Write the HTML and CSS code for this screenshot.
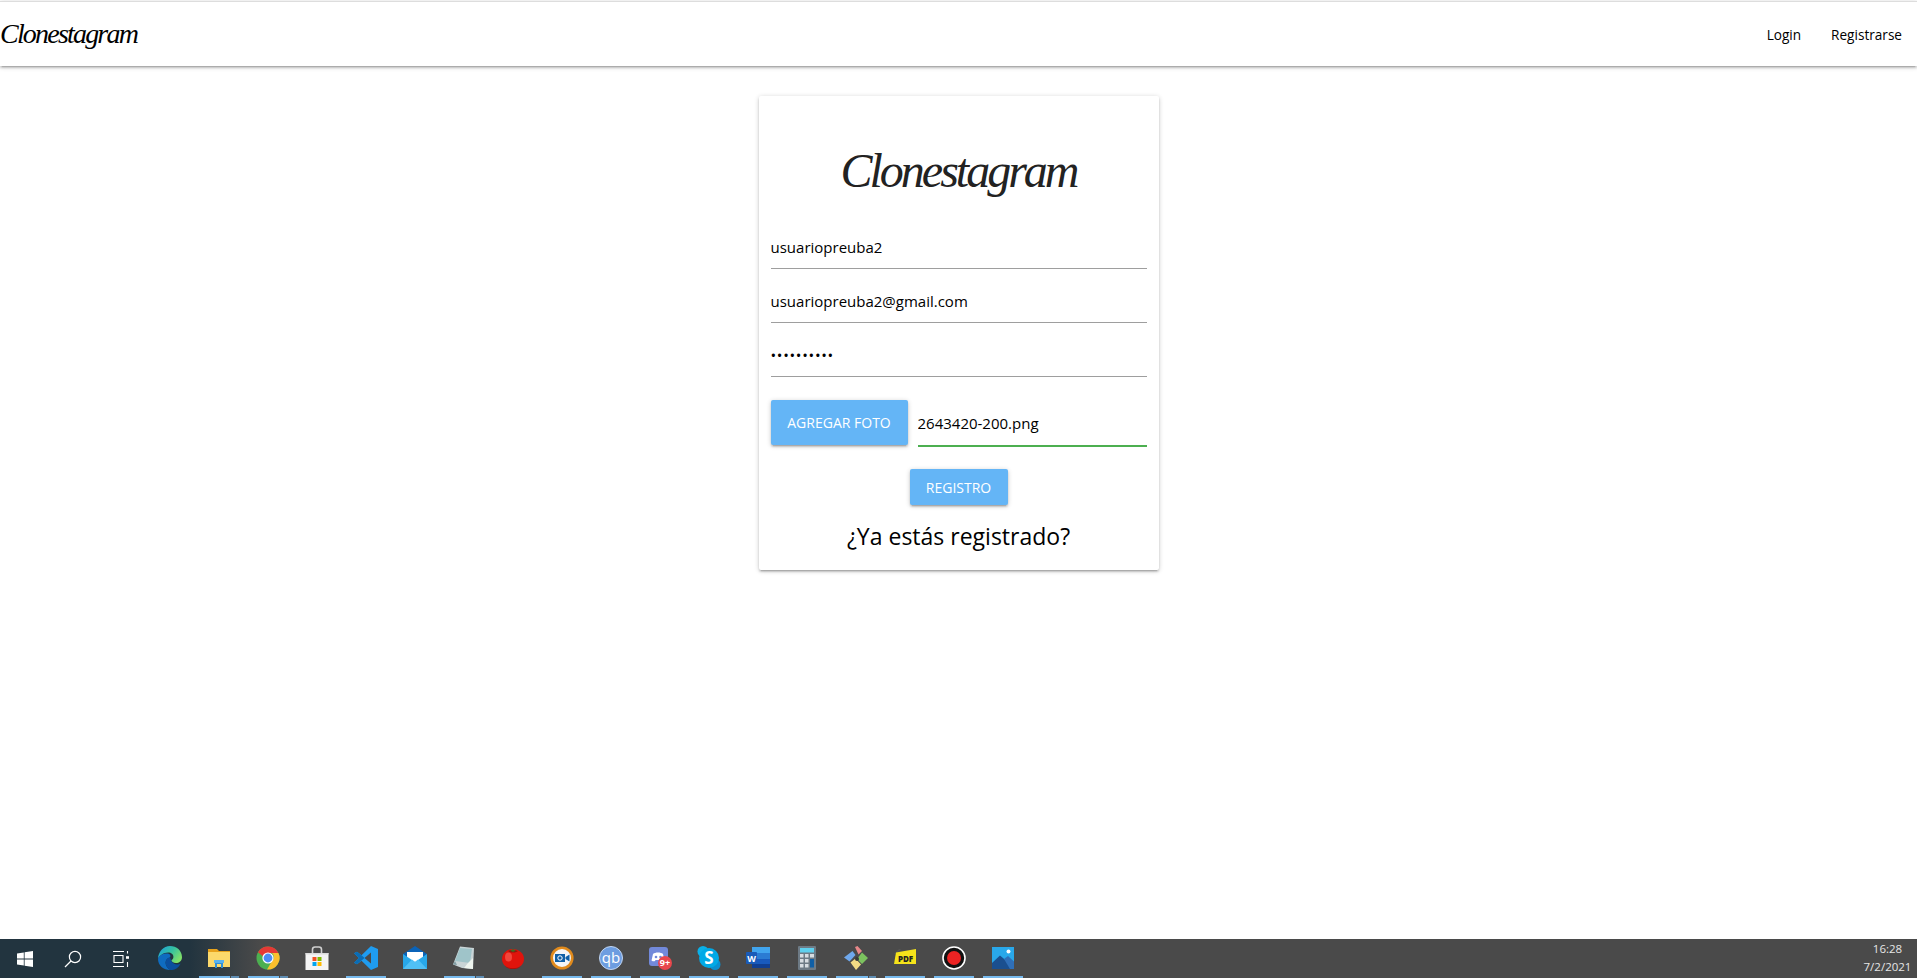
FILE: index.html
```html
<!DOCTYPE HTML>
<html>
<head>
<meta charset="utf-8">
<title>Clonestagram</title>
<link rel="stylesheet" href="styles.css">
</head>

<body>
	<nav class="nav">
		<a class="nav-logo" href="#">Clonestagram</a>
		<ul class="nav-links">
			<li><a href="#">Login</a></li>
			<li><a href="#">Registrarse</a></li>
		</ul>
	</nav>

	<main class="main">
		<form class="card">
			<h1 class="card-logo">Clonestagram</h1>
			<input class="field" type="text" value="usuariopreuba2">
			<input class="field" type="email" value="usuariopreuba2@gmail.com">
			<input class="field field-pass" type="password" value="contrasena">
			<div class="file-row">
				<span class="btn btn-file">Agregar foto</span>
				<input class="file-name" type="text" value="2643420-200.png">
			</div>
			<button class="btn btn-send" type="button">Registro</button>
			<p class="card-foot">¿Ya estás registrado?</p>
		</form>
	</main>

	<footer class="taskbar">
		<!-- inicio, buscar, vista de tareas -->
		<div class="sys"><svg width="16" height="16" viewBox="0 0 16 16"><path fill="#fff" d="M0 2.4 6.8 1.4V7.5H0ZM7.6 1.3 16 0V7.5H7.6ZM0 8.4H6.8V14.6L0 13.6ZM7.6 8.4H16V16L7.6 14.7Z"/></svg></div>
		<div class="sys"><svg width="18" height="18" viewBox="0 0 18 18" fill="none" stroke="#fff" stroke-width="1.2"><circle cx="11" cy="7" r="5.6"/><path d="M7 11 1 17"/></svg></div>
		<div class="sys"><svg width="18" height="18" viewBox="0 0 18 18" fill="none" stroke="#fff" stroke-width="1.1"><path d="M1 1.5H12M1 16.5H12M2 5.5H11V12.5H2ZM15.5 1V3.5M15.5 12V17"/><path stroke-width="2.6" d="M14 7.5H17"/></svg></div>

		<!-- edge -->
		<div class="app">
			<svg class="ico" viewBox="0 0 24 24"><defs><linearGradient id="edgeA" x1="0" y1="0" x2="1" y2="0.6"><stop offset="0" stop-color="#1b9de2"/><stop offset=".55" stop-color="#35c1a0"/><stop offset="1" stop-color="#7fe06a"/></linearGradient></defs><path fill="url(#edgeA)" d="M12 0C18.6 0 24 4.6 24 11.2 24 15 21 17 18 17 15 17 13.4 15.6 13.4 14.6 13.4 13.8 15.4 13.6 15.4 10.8 15.4 8.4 13.2 6.6 10.2 6.6 5 6.6 1 10.2 0 13 .2 5.8 5.4 0 12 0Z"/><path fill="#0f6cc0" d="M0 13C.8 9.6 5 7.6 8.8 7.6 12 7.6 13.2 9.8 12 11.6 9.4 11.8 7.6 14 7.6 16.8 7.6 19.6 9.4 22.4 12.4 24 5.4 24 0 19.4 0 13Z"/><path fill="#0b4f9e" d="M12 11.6C13 13.6 13.2 16 15.6 17.4 18 18.8 20.8 18.6 22.6 17.4 20.6 21.8 17 24 12.4 24 9.4 22.4 7.6 19.6 7.6 16.8 7.6 14 9.4 11.8 12 11.6Z"/></svg>
		</div>
		<!-- explorador -->
		<div class="app">
			<svg class="ico" viewBox="0 0 24 24"><path fill="#e8a31c" d="M1 3H10L12 5H23V9H1Z"/><path fill="#fcd96b" d="M1 6H23V21H1Z"/><path fill="#2f8fd8" d="M8 15H16V22H14V18H10V22H8Z"/><path fill="#5ab2ee" d="M7 14H17V17H7Z"/></svg>
			<span class="run run-stack"></span>
		</div>
		<!-- chrome -->
		<div class="app">
			<svg class="ico" viewBox="0 0 24 24"><circle cx="12" cy="12" r="11.5" fill="#4caf50"/><path fill="#e53935" d="M2 6.2A11.5 11.5 0 0 1 22.4 7H12A5 5 0 0 0 7.2 10.6Z"/><path fill="#fbc02d" d="M22.4 7A11.5 11.5 0 0 1 11 23.5L16.3 14.5A5 5 0 0 0 16 7Z"/><circle cx="12" cy="12" r="5.6" fill="#fff"/><circle cx="12" cy="12" r="4.4" fill="#4c8bf5"/></svg>
			<span class="run run-stack"></span>
		</div>
		<!-- tienda -->
		<div class="app">
			<svg class="ico" viewBox="0 0 24 24"><path fill="none" stroke="#d0d0d0" stroke-width="1.6" d="M7.5 7V3.5C7.5 2 8.5 1 10 1H14C15.5 1 16.5 2 16.5 3.5V7"/><path fill="#f4f4f4" d="M.5 7H23.500V24H.5Z"/><path fill="#dcdcdc" d="M.5 7H23.500V8.500H.5Z"/><path fill="#f25022" d="M7.500 11H11.500V15H7.500Z"/><path fill="#7fba00" d="M12.500 11H16.500V15H12.500Z"/><path fill="#00a4ef" d="M7.500 16H11.500V20H7.500Z"/><path fill="#ffb900" d="M12.500 16H16.500V20H12.500Z"/></svg>
		</div>
		<!-- vscode -->
		<div class="app">
			<svg class="ico" viewBox="0 0 24 24"><path fill="#1f9cf0" d="M17 0 24 3V21L17 24 7.500 14.800 3 18.300 0 16.700 5 12 0 7.300 3 5.700 7.500 9.200ZM17 6.500 10.500 12 17 17.500Z"/><path fill="#0a6cb4" d="M7.500 9.200 10.500 12 3 18.300 0 16.700 5 12 0 7.300 3 5.700Z"/></svg>
			<span class="run"></span>
		</div>
		<!-- correo -->
		<div class="app">
			<svg class="ico" viewBox="0 0 24 24"><path fill="#0a63b8" d="M12 0 24 8V12H0V8Z"/><path fill="#fff" d="M4 6H20V16H4Z"/><path fill="#28a8ea" d="M0 8 12 16 24 8V23H0Z"/><path fill="#50c0f5" d="M0 23 9 13.500 12 16 15 13.500 24 23Z"/></svg>
		</div>
		<!-- notas -->
		<div class="app">
			<svg class="ico" viewBox="0 0 24 24"><path fill="#c9d4d6" d="M8 .5 22 2 21 23 10 22 1 18.500Z"/><path fill="#9fc4c9" d="M8 2 20 3 18 17 3 15Z"/><path fill="#eef4ee" d="M16 17 21 12 21 23 12 22Z"/><path fill="#7f9ca3" d="M1 18.500 3 15 5 19Z"/></svg>
			<span class="run run-stack"></span>
		</div>
		<!-- tomate -->
		<div class="app">
			<svg class="ico" viewBox="0 0 24 24"><ellipse cx="12" cy="13" rx="11" ry="10" fill="#e0140c"/><ellipse cx="7.500" cy="11" rx="3.500" ry="4.500" fill="#f2463c"/><path fill="#a50d08" d="M4 20C8 23 16 23 20 20 17 24 7 24 4 20Z"/><path fill="#8a1a0c" d="M7 5C10 3.500 14 3.500 17 5 14 7 10 7 7 5Z"/><path fill="#3d6d22" d="M12 6 9.500 4.500 12 3 14.500 4.500Z"/></svg>
		</div>
		<!-- camara -->
		<div class="app">
			<svg class="ico" viewBox="0 0 24 24"><circle cx="12" cy="12" r="10.300" fill="#f3f5f7" stroke="#e08a1c" stroke-width="2.600"/><path fill="#0f5fa6" d="M5 8H15V16H5ZM15.500 11 19.500 8.500V15.500L15.500 13Z"/><circle cx="10" cy="12" r="2.200" fill="none" stroke="#fff"/></svg>
			<span class="run"></span>
		</div>
		<!-- qbittorrent -->
		<div class="app">
			<svg class="ico" viewBox="0 0 24 24"><circle cx="12" cy="12" r="11.500" fill="#6d9de0" stroke="#c2d6f2"/><text x="12" y="17" text-anchor="middle" class="qb">qb</text></svg>
			<span class="run"></span>
		</div>
		<!-- discord -->
		<div class="app">
			<svg class="ico" viewBox="0 0 24 24"><rect x="1" y="1" width="19" height="19" rx="3" fill="#7289da"/><path fill="#fff" d="M5 8C7 6 13 6 15 8L16.500 14.500C15 15.500 14 15.500 13 15L12.500 14H7.500L7 15C6 15.500 5 15.500 3.500 14.500Z"/><circle cx="8" cy="11" r="1.300" fill="#7289da"/><circle cx="12.500" cy="11" r="1.300" fill="#7289da"/><circle cx="17" cy="17" r="7" fill="#e8474c"/><text x="17" y="20" text-anchor="middle" class="badge">9+</text></svg>
			<span class="run"></span>
		</div>
		<!-- skype -->
		<div class="app">
			<svg class="ico" viewBox="0 0 24 24"><circle cx="6" cy="5.500" r="5.500" fill="#0ab0e8"/><circle cx="18" cy="18.500" r="5.500" fill="#0a8fcf"/><circle cx="12" cy="12" r="10" fill="#00a9e6"/><text x="12" y="18" text-anchor="middle" class="sky">S</text></svg>
			<span class="run"></span>
		</div>
		<!-- word -->
		<div class="app">
			<svg class="ico" viewBox="0 0 24 24"><path fill="#41a5ee" d="M6 1H24V7H6Z"/><path fill="#2b7cd3" d="M6 7H24V13H6Z"/><path fill="#185abd" d="M6 13H24V18H6Z"/><path fill="#103f91" d="M6 18H24V22H6Z"/><rect y="6" width="11" height="12" rx="1" fill="#1a5bb8"/><text x="5.500" y="15.500" text-anchor="middle" class="wd">W</text></svg>
			<span class="run"></span>
		</div>
		<!-- calculadora -->
		<div class="app">
			<svg class="ico" viewBox="0 0 24 24"><rect x="3" y="0" width="18" height="24" rx="1" fill="#6d7a85"/><path fill="#5fd0ee" d="M5 2H19V6.500H5Z"/><path fill="#d7dde2" d="M5 8H8.500V11.500H5ZM10 8H13.500V11.500H10ZM5 13H8.500V16.500H5ZM10 13H13.500V16.500H10ZM5 18H8.500V21.500H5ZM10 18H13.500V21.500H10ZM15 8H19V11.500H15Z"/><path fill="#0f5fa6" d="M15 13H19V21.500H15Z"/></svg>
			<span class="run"></span>
		</div>
		<!-- git -->
		<div class="app">
			<svg class="ico" viewBox="0 0 24 24"><path fill="#e8888a" d="M11 1 13.500 0 18 5 14.500 8.500Z"/><path fill="#6fa8ec" d="M8.500 5 11.500 9 5.500 15.500 0 11.500Z"/><path fill="#7cc25f" d="M18 6.500 24 12 18 18 13 13Z"/><path fill="#f3dc85" d="M6.500 16.500 11.500 12.500 17 18.500 12 24Z"/><circle cx="13" cy="13" r="2" fill="#3a3a3a"/></svg>
			<span class="run run-git"></span>
		</div>
		<!-- pdf -->
		<div class="app">
			<svg class="ico" viewBox="0 0 24 24"><path fill="#555" d="M1 8 6 3H8L3 8Z"/><path fill="#f5e31a" d="M3 6.500 23 3V18H1Z"/><text x="12.500" y="15.500" text-anchor="middle" class="pdf">PDF</text></svg>
			<span class="run"></span>
		</div>
		<!-- grabar -->
		<div class="app">
			<svg class="ico" viewBox="0 0 24 24"><circle cx="12" cy="12" r="11" fill="#111" stroke="#fff" stroke-width="1.600"/><circle cx="12" cy="12" r="7" fill="#ec2323"/></svg>
			<span class="run"></span>
		</div>
		<!-- fotos -->
		<div class="app">
			<svg class="ico" viewBox="0 0 24 24"><path fill="#29a8ea" d="M1 1H23V23H1Z"/><path fill="#1a4f8f" d="M1 23V17L9 9.500 19 18V23Z"/><path fill="#2f6fb8" d="M13 13 17 10 23 15.500V23H19Z"/><circle cx="17.500" cy="5.500" r="2" fill="#fff"/></svg>
			<span class="run"></span>
		</div>

		<div class="clock">
			<span>16:28</span>
			<span>7/2/2021</span>
		</div>
	</footer>
</body>
</html>
```
FILE: styles.css
```css
*{padding:0;margin:0;box-sizing:border-box;list-style:none}
body{display:flex;flex-direction:column;height:978px;font-family:"Open Sans","Noto Sans",sans-serif;color:#000;background:#fff;overflow:hidden}
a{color:inherit;text-decoration:none}

.nav{height:65px;margin-top:1px;border-top:1px solid #ddd;display:flex;justify-content:space-between;align-items:center;background:#fff;box-shadow:0 2px 2px 0 rgba(0,0,0,.14),0 3px 1px -2px rgba(0,0,0,.12),0 1px 5px 0 rgba(0,0,0,.2)}
.nav-logo{font-family:"Liberation Serif",serif;font-style:italic;font-size:28px;letter-spacing:-1.8px}
.nav-links{display:flex}
.nav-links a{display:block;padding:0 15px;font-size:13.6px}

.main{flex:1;display:flex;justify-content:center;align-items:flex-start;padding-top:30px}
.card{width:400px;height:474px;padding:0 12px;border-radius:2px;display:flex;flex-direction:column;align-items:center;box-shadow:0 2px 2px 0 rgba(0,0,0,.14),0 3px 1px -2px rgba(0,0,0,.12),0 1px 5px 0 rgba(0,0,0,.2)}
.card-logo{font-family:"Liberation Serif",serif;font-style:italic;font-size:48px;font-weight:400;color:#222;height:129px;padding-top:20px;line-height:109px;letter-spacing:-3px}

.field{display:block;width:100%;height:44px;margin-bottom:10px;border:0;border-bottom:1px solid #9e9e9e;outline:0;font:15px "Open Sans",sans-serif;color:#000}
.field-pass{letter-spacing:.7px}
.file-row{display:flex;width:100%;gap:10px;margin-top:13px}
.btn{display:block;border:0;border-radius:2px;background:#64b5f6;color:#fff;text-transform:uppercase;text-align:center;font:14px "Open Sans",sans-serif;box-shadow:0 2px 2px 0 rgba(0,0,0,.14),0 3px 1px -2px rgba(0,0,0,.12),0 1px 5px 0 rgba(0,0,0,.2)}
.btn-file{width:137px;height:45px;line-height:45px}
.file-name{flex:1;min-width:0;height:47px;border:0;border-bottom:2px solid #4caf50;outline:0;font:15px "Open Sans",sans-serif;color:#000}
.btn-send{width:98px;height:36px;margin-top:22px}
.card-foot{margin-top:15px;font-size:23px}

.taskbar{height:39px;padding-left:1px;display:flex;background:linear-gradient(90deg,#22343f 0,#22343f 190px,#4a4a4a 260px)}
.sys{width:48px;display:flex;align-items:center;justify-content:center}
.app{width:49px;display:flex;flex-direction:column;align-items:center;padding-top:7px}
.ico{width:24px;height:24px;display:block;flex:none}
.run{display:block;margin-top:auto;width:40px;height:2px;background:#76b9ed}
.run-stack{background:linear-gradient(90deg,#76b9ed 31px,#4a4a4a 31px,#4a4a4a 32px,#5f8db3 32px)}
.run-git{background:linear-gradient(90deg,#76b9ed 32px,#4a4a4a 32px,#4a4a4a 33px,#5f8db3 33px)}
.qb{font:500 15px "Open Sans",sans-serif;fill:#fff}
.badge{font:700 9px "Open Sans",sans-serif;fill:#fff}
.sky{font:700 17px "Open Sans",sans-serif;fill:#fff}
.wd{font:700 9px "Open Sans",sans-serif;fill:#fff}
.pdf{font:800 8px "Open Sans",sans-serif;fill:#222}
.clock{margin-left:auto;width:57px;padding-top:3px;display:flex;flex-direction:column;align-items:center;gap:4px;font-size:11.5px;line-height:14px;color:#e6e6e6;margin-right:1px}
```
